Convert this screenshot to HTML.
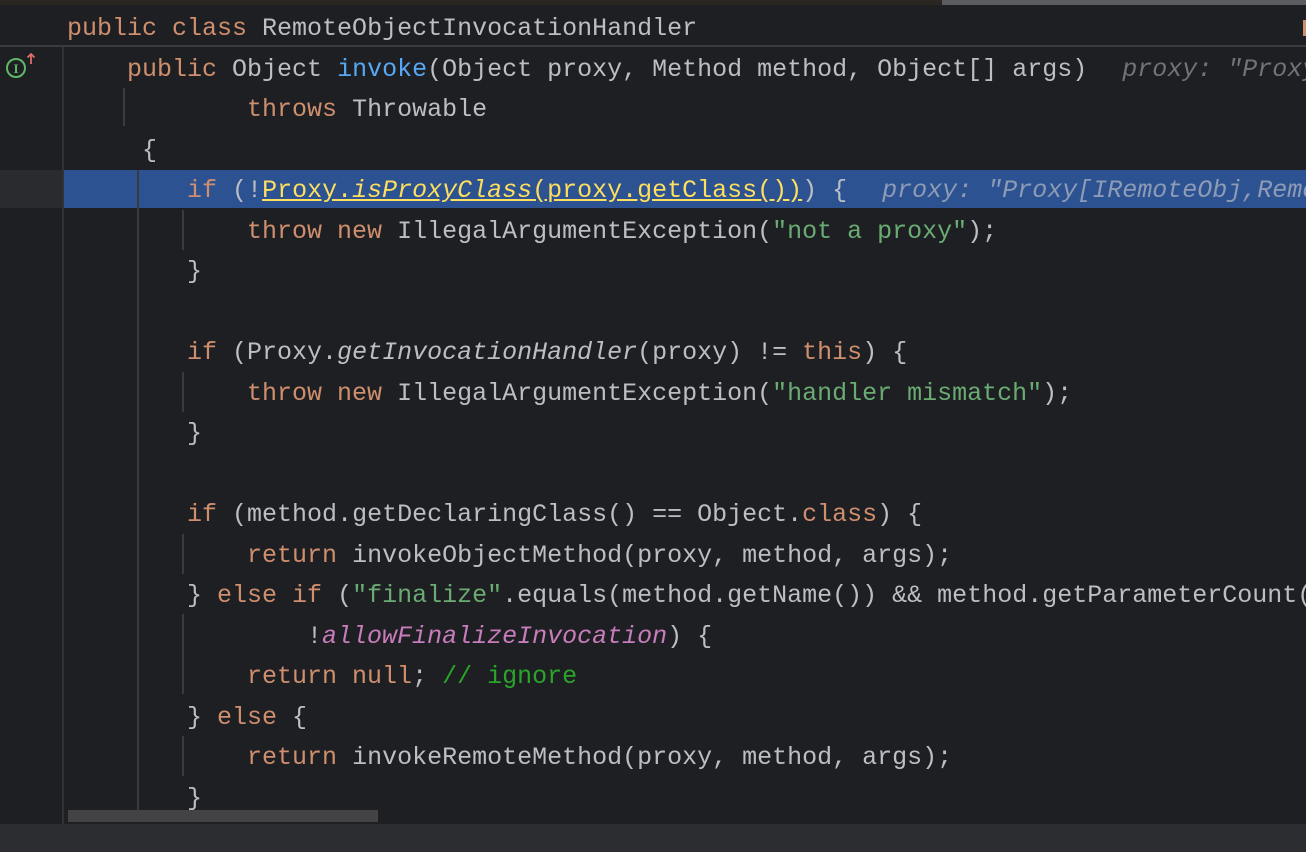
<!DOCTYPE html>
<html><head><meta charset="utf-8"><style>
html,body{margin:0;padding:0;background:#1e1f22;width:1306px;height:852px;overflow:hidden;position:relative;font-family:"Liberation Mono",monospace;}
#w{position:absolute;left:0;top:0;width:1306px;height:852px;overflow:hidden;}
.ln{position:absolute;left:67px;height:40px;line-height:40px;font-size:25px;white-space:pre;color:#bcbec4;}
.k{color:#cf8e6d}.m{color:#56a8f5}.s{color:#6aab73}.i{font-style:italic}.f{color:#c77dbb;font-style:italic}.c{color:#2aa52a}
.h{color:#6f737a;font-style:italic;margin-left:5px}
.y{color:#fede5d;text-decoration:underline;text-decoration-color:#fede5d}
.abs{position:absolute}
</style></head><body><div id="w">
<div class="abs" style="left:0;top:0;width:1306px;height:5px;background:#2b2622"></div>
<div class="abs" style="left:942px;top:0;width:364px;height:5px;background:#5a5c62"></div>
<div class="abs" style="left:0;top:45px;width:1306px;height:2px;background:#393b40"></div>
<div class="abs" style="left:0;top:170px;width:63px;height:38px;background:#2a2b2e"></div>
<div class="abs" style="left:64px;top:170px;width:1242px;height:38px;background:#2c5292"></div>
<div class="abs" style="left:62px;top:47px;width:2px;height:777px;background:#313237"></div>
<div class="abs" style="left:123px;top:88px;width:2px;height:38px;background:#393b40"></div>
<div class="abs" style="left:137px;top:170px;width:2px;height:648px;background:#393b40"></div>
<div class="abs" style="left:182px;top:210px;width:2px;height:40px;background:#393b40"></div>
<div class="abs" style="left:182px;top:372px;width:2px;height:40px;background:#393b40"></div>
<div class="abs" style="left:182px;top:534px;width:2px;height:40px;background:#393b40"></div>
<div class="abs" style="left:182px;top:614px;width:2px;height:80px;background:#393b40"></div>
<div class="abs" style="left:182px;top:736px;width:2px;height:40px;background:#393b40"></div>
<svg class="abs" style="left:4px;top:52px" width="32" height="28"><circle cx="12" cy="16" r="9" fill="none" stroke="#5fb865" stroke-width="2"/><text x="12" y="21" font-size="13" font-family="Liberation Serif" fill="#5fb865" text-anchor="middle" font-weight="bold">I</text><path d="M27 12V2M23.5 5.5L27 2l3.5 3.5" stroke="#e06c6c" stroke-width="1.8" fill="none"/></svg>
<div class="abs" style="left:1303px;top:20px;width:3px;height:16px;background:#cf8e6d"></div>
<div class="ln" style="top:9px"><span class="k">public class </span>RemoteObjectInvocationHandler</div>
<div class="ln" style="top:50px">    <span class="k">public </span>Object <span class="m">invoke</span>(Object proxy, Method method, Object[] args)  <span class="h">proxy: "Proxy[IRemoteObj,RemoteObjectInvocationHandler]"</span></div>
<div class="ln" style="top:90px">            <span class="k">throws </span>Throwable</div>
<div class="ln" style="top:131px">     {</div>
<div class="ln" style="top:171px">        <span class="k">if </span>(!<span class="y">Proxy.<span class="i">isProxyClass</span>(proxy.getClass())</span>) {  <span class="h" style="color:#8d9bb5">proxy: "Proxy[IRemoteObj,RemoteObjectInvocationHandler]"</span></div>
<div class="ln" style="top:212px">            <span class="k">throw new </span>IllegalArgumentException(<span class="s">"not a proxy"</span>);</div>
<div class="ln" style="top:252px">        }</div>
<div class="ln" style="top:333px">        <span class="k">if </span>(Proxy.<span class="i">getInvocationHandler</span>(proxy) != <span class="k">this</span>) {</div>
<div class="ln" style="top:374px">            <span class="k">throw new </span>IllegalArgumentException(<span class="s">"handler mismatch"</span>);</div>
<div class="ln" style="top:414px">        }</div>
<div class="ln" style="top:495px">        <span class="k">if </span>(method.getDeclaringClass() == Object.<span class="k">class</span>) {</div>
<div class="ln" style="top:536px">            <span class="k">return </span>invokeObjectMethod(proxy, method, args);</div>
<div class="ln" style="top:576px">        } <span class="k">else if </span>(<span class="s">"finalize"</span>.equals(method.getName()) &amp;&amp; method.getParameterCount() == 0 &amp;&amp;</div>
<div class="ln" style="top:617px">                !<span class="f">allowFinalizeInvocation</span>) {</div>
<div class="ln" style="top:657px">            <span class="k">return null</span>; <span class="c">// ignore</span></div>
<div class="ln" style="top:698px">        } <span class="k">else </span>{</div>
<div class="ln" style="top:738px">            <span class="k">return </span>invokeRemoteMethod(proxy, method, args);</div>
<div class="ln" style="top:779px">        }</div>
<div class="abs" style="left:68px;top:810px;width:310px;height:12px;background:#434345"></div>
<div class="abs" style="left:0;top:824px;width:1306px;height:28px;background:#2b2d30"></div>
</div></body></html>
